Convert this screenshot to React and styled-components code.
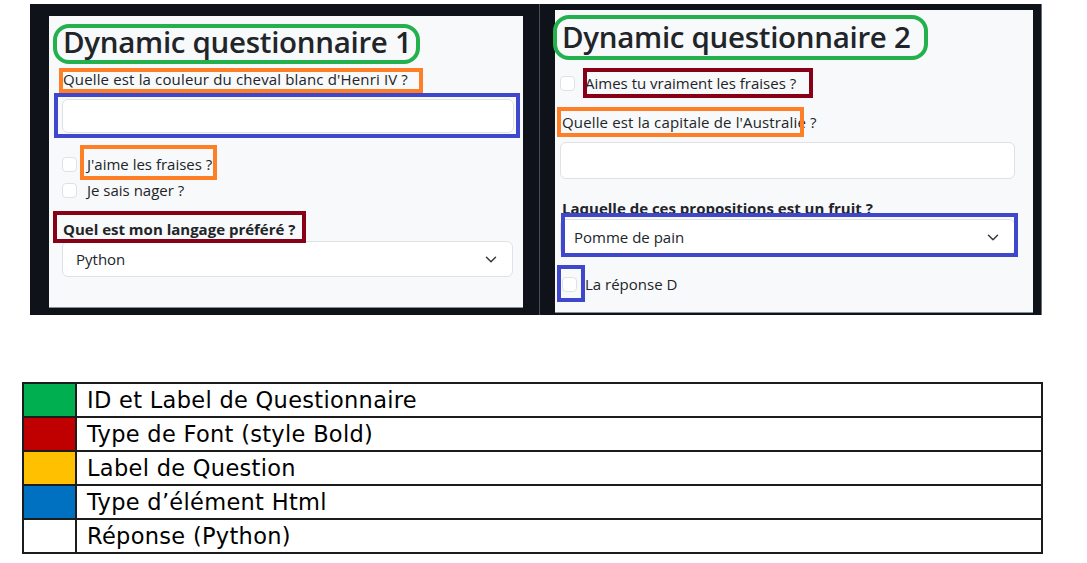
import React from 'react';
import styled, { createGlobalStyle } from 'styled-components';

const colors = {
  frame: '#0f1218',
  panel: '#f8f9fa',
  text: '#212529',
  border: '#dee2e6',
  green: '#22b14c',
  orange: '#ff7f27',
  blue: '#3f48cc',
  wine: '#880015',
};

const GlobalStyle = createGlobalStyle`
  html, body {
    margin: 0;
    padding: 0;
    background: #ffffff;
  }
  body {
    font-family: "Open Sans", "Noto Sans", sans-serif;
  }
`;

const Page = styled.div`
  width: 1087px;
  height: 563px;
  padding: 4px 0 0 0;
  box-sizing: border-box;
  overflow: hidden;
`;

const Shots = styled.div`
  display: flex;
  margin-left: 30px;
  height: 311px;
`;

const Shot = styled.div`
  display: flex;
  box-sizing: border-box;
  width: ${p => p.$w}px;
  padding: ${p => p.$pad};
  background: ${colors.frame};
  border-left: ${p => (p.$split ? '1px solid #4a4f57' : 'none')};
  border-right: ${p => (p.$edge ? '1px solid #6b7078' : 'none')};
`;

const Panel = styled.div`
  position: relative;
  flex: 1;
  display: flex;
  flex-direction: column;
  align-items: flex-start;
  box-sizing: border-box;
  padding: ${p => p.$pad};
  background: ${colors.panel};
  border-bottom: 1px solid #8a9097;
  font-family: "Open Sans", "Noto Sans", sans-serif;
  color: ${colors.text};
`;

const Title = styled.h1`
  margin: 0;
  font-size: 29.5px;
  font-weight: 600;
  line-height: 34px;
  letter-spacing: -0.3px;
  color: ${colors.text};
`;

const QLabel = styled.div`
  margin-top: ${p => p.$mt}px;
  font-size: 15px;
  line-height: 20px;
  font-weight: ${p => (p.$bold ? 700 : 400)};
  letter-spacing: ${p => (p.$bold ? '0' : '0.15px')};
`;

const TextInput = styled.div`
  margin-top: ${p => p.$mt}px;
  width: ${p => p.$w}px;
  height: ${p => p.$h}px;
  box-sizing: border-box;
  background: #ffffff;
  border: 1px solid ${colors.border};
  border-radius: 6px;
`;

const Select = styled.div`
  margin-top: ${p => p.$mt}px;
  width: ${p => p.$w}px;
  height: 36px;
  box-sizing: border-box;
  display: flex;
  align-items: center;
  justify-content: space-between;
  padding: 0 15px 0 13px;
  background: #ffffff;
  border: 1px solid ${colors.border};
  border-radius: 6px;
  font-size: 15px;
  color: ${colors.text};

  svg {
    width: 12px;
    height: 9px;
  }
`;

const CheckRow = styled.div`
  margin-top: ${p => p.$mt}px;
  height: 26px;
  display: flex;
  align-items: center;
  gap: ${p => p.$gap || 10}px;
  font-size: 15px;
  line-height: 20px;
`;

const Box = styled.span`
  width: 15px;
  height: 15px;
  box-sizing: border-box;
  background: #ffffff;
  border: 1px solid ${colors.border};
  border-radius: 4px;
`;

const Mark = styled.div`
  position: absolute;
  left: ${p => p.$x}px;
  top: ${p => p.$y}px;
  width: ${p => p.$w}px;
  height: ${p => p.$h}px;
  box-sizing: border-box;
  border: 4px solid ${p => p.$c};
  border-radius: ${p => p.$r || 0}px;
  pointer-events: none;
`;

const Legend = styled.div`
  margin: 67px 0 0 22px;
  width: 1021px;
  box-sizing: border-box;
  border: 2px solid #1c1c1c;
  border-bottom: none;
  font-family: "DejaVu Sans", "Open Sans", sans-serif;
`;

const LegendRow = styled.div`
  display: flex;
  height: 34px;
  border-bottom: 2px solid #1c1c1c;
  box-sizing: border-box;
`;

const Swatch = styled.div`
  width: 51px;
  flex: none;
  background: ${p => p.$c};
  border-right: 2px solid #1c1c1c;
`;

const LegendText = styled.div`
  display: flex;
  align-items: center;
  padding-left: 10px;
  font-size: 22.5px;
  letter-spacing: 0.3px;
  color: #000000;
`;

const Chevron = () => (
  <svg viewBox="0 0 16 12" fill="none" stroke="#343a40" strokeWidth="2" strokeLinecap="round" strokeLinejoin="round">
    <path d="m2 3 6 6 6-6" />
  </svg>
);

const legend = [
  { c: '#00b050', t: 'ID et Label de Questionnaire' },
  { c: '#c00000', t: 'Type de Font (style Bold)' },
  { c: '#ffc000', t: 'Label de Question' },
  { c: '#0070c0', t: 'Type d’élément Html' },
  { c: '#ffffff', t: 'Réponse (Python)' },
];

const App = () => (
  <Page>
    <GlobalStyle />
    <Shots>
      <Shot $w={509} $pad="12px 16px 7px 19px">
        <Panel $pad="9px 0 0 14px">
          <Title>Dynamic questionnaire 1</Title>
          <QLabel $mt={10}>Quelle est la couleur du cheval blanc d'Henri IV ?</QLabel>
          <TextInput $mt={10} $w={452} $h={34} style={{ marginLeft: -1 }} />
          <CheckRow $mt={18}>
            <Box style={{ marginLeft: -1 }} />
            <span>J'aime les fraises ?</span>
          </CheckRow>
          <CheckRow $mt={0}>
            <Box style={{ marginLeft: -1 }} />
            <span>Je sais nager ?</span>
          </CheckRow>
          <QLabel $mt={16} $bold>Quel est mon langage préféré ?</QLabel>
          <Select $mt={2} $w={451} style={{ marginLeft: -1 }}>
            <span>Python</span>
            <Chevron />
          </Select>

          <Mark $x={4} $y={8} $w={367} $h={40} $r={16} $c={colors.green} />
          <Mark $x={10} $y={52} $w={364} $h={25} $c={colors.orange} />
          <Mark $x={5} $y={77} $w={466} $h={45} $c={colors.blue} />
          <Mark $x={31} $y={129} $w={137} $h={35} $c={colors.orange} />
          <Mark $x={4} $y={195} $w={253} $h={32} $c={colors.wine} />
        </Panel>
      </Shot>
      <Shot $w={503} $pad="6px 8px 2px 15px" $split $edge>
        <Panel $pad="10px 0 0 7px">
          <Title>Dynamic questionnaire 2</Title>
          <CheckRow $mt={16} style={{ marginLeft: -2 }}>
            <Box />
            <span>Aimes tu vraiment les fraises ?</span>
          </CheckRow>
          <QLabel $mt={16}>Quelle est la capitale de l'Australie ?</QLabel>
          <TextInput $mt={10} $w={455} $h={37} style={{ marginLeft: -2 }} />
          <QLabel $mt={19} $bold>Laquelle de ces propositions est un fruit ?</QLabel>
          <Select $mt={1} $w={455} style={{ marginLeft: -2 }}>
            <span>Pomme de pain</span>
            <Chevron />
          </Select>
          <CheckRow $mt={16} $gap={8}>
            <Box />
            <span>La réponse D</span>
          </CheckRow>

          <Mark $x={-2} $y={5} $w={375} $h={45} $r={16} $c={colors.green} />
          <Mark $x={28} $y={58} $w={230} $h={30} $c={colors.wine} />
          <Mark $x={2} $y={97} $w={247} $h={30} $c={colors.orange} />
          <Mark $x={6} $y={203} $w={457} $h={44} $c={colors.blue} />
          <Mark $x={2} $y={255} $w={28} $h={37} $c={colors.blue} />
        </Panel>
      </Shot>
    </Shots>
    <Legend>
      {legend.map(({ c, t }) => (
        <LegendRow key={t}>
          <Swatch $c={c} />
          <LegendText>{t}</LegendText>
        </LegendRow>
      ))}
    </Legend>
  </Page>
);

export default App;
